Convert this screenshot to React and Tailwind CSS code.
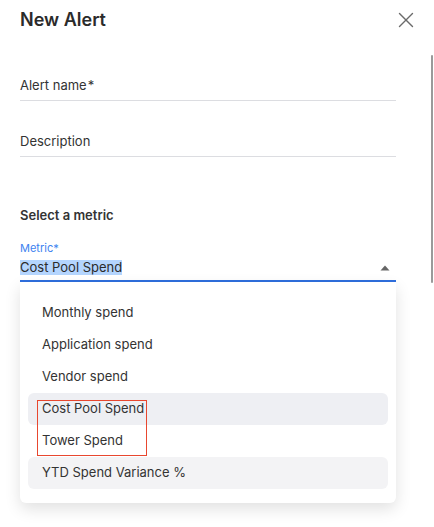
import { X } from 'lucide-react';

const options = [
  { label: 'Monthly spend' },
  { label: 'Application spend' },
  { label: 'Vendor spend' },
  { label: 'Cost Pool Spend', bg: 'bg-[#eeeff3]' },
  { label: 'Tower Spend' },
  { label: 'YTD Spend Variance %', bg: 'bg-[#f3f3f5]' },
];

const Field = ({ label, required, className = '' }) => (
  <div className={`pb-[5px] border-b border-[#dcdde1] text-[13px] leading-5 text-[#333] ${className}`}>
    {label}
    {required && <span className="ml-[1px]">*</span>}
  </div>
);

export default function App() {
  return (
    <div className="relative w-[434px] h-[527px] bg-white overflow-hidden font-['Inter',sans-serif] text-[#333]">
      {/* Header */}
      <div className="h-10 flex items-center justify-between pl-5 pr-[15px]">
        <h2 className="text-[18px] font-semibold text-[#2b2b2b] leading-6">New Alert</h2>
        <X size={26} strokeWidth={1.3} className="text-[#6b6b6b]" />
      </div>

      {/* Scrollbar */}
      <div className="absolute right-[1px] top-[55px] h-[228px] w-[2px] rounded bg-[#9a9a9a]" />

      <div className="pl-5 w-[396px]">
        <Field label="Alert name" required className="mt-[35px]" />
        <Field label="Description" className="mt-[30px]" />

        <div className="mt-[48px] text-[13px] leading-5 font-semibold text-[#333]">Select a metric</div>

        {/* Metric select */}
        <div className="mt-[15px] text-[11px] leading-4 text-[#3d82f0]">Metric*</div>
        <div className="flex items-center justify-between h-[26px] pb-[1px] border-b-2 border-[#2f6fde]">
          <span className="inline-block text-[13px] leading-[15px] bg-[#b4d5fe] text-[#2b2b2b]">Cost Pool Spend</span>
          <svg width="10" height="6" viewBox="0 0 10 6" className="mr-[6px]">
            <path d="M5 0.5 L9.5 5.5 L0.5 5.5 Z" fill="#666" />
          </svg>
        </div>

        {/* Dropdown menu */}
        <div className="relative pt-[15px] pb-[14px] px-2 bg-white rounded-b-md shadow-[0_6px_16px_rgba(0,0,0,0.12)]">
          {options.map((o) => (
            <div
              key={o.label}
              className={`h-8 flex items-center px-[14px] rounded-md text-[13px] text-[#333] ${o.bg || ''}`}
            >
              {o.label}
            </div>
          ))}
          <div className="absolute left-[17px] top-[118px] w-[110px] h-[56px] border-[1.5px] border-[#e8472f]" />
        </div>
      </div>
    </div>
  );
}
